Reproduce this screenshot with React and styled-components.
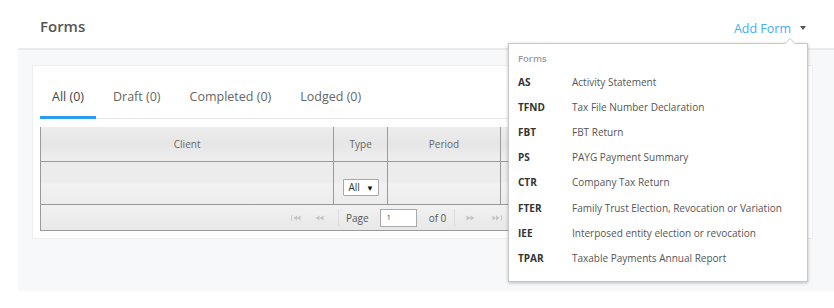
import React from "react";
import styled, { createGlobalStyle } from "styled-components";

const GlobalStyle = createGlobalStyle`
  body {
    margin: 0;
    background: #ffffff;
    font-family: "Open Sans", "Noto Sans", Arial, sans-serif;
  }
`;

const forms = [
  ["AS", "Activity Statement"],
  ["TFND", "Tax File Number Declaration"],
  ["FBT", "FBT Return"],
  ["PS", "PAYG Payment Summary"],
  ["CTR", "Company Tax Return"],
  ["FTER", "Family Trust Election, Revocation or Variation"],
  ["IEE", "Interposed entity election or revocation"],
  ["TPAR", "Taxable Payments Annual Report"],
];

const tabs = ["All (0)", "Draft (0)", "Completed (0)", "Lodged (0)"];

const columns = [
  ["Client", 294],
  ["Type", 54],
  ["Period", 113],
  ["Status", 110],
  ["Modified", 194],
];

// small pager arrows, drawn as in the old grid toolbar
function PagerIcon({ dir, bar }) {
  const flip = dir === "right" ? "scale(-1,1) translate(-12,0)" : undefined;
  return (
    <svg width="12" height="8" viewBox="0 0 12 8">
      <g transform={flip} fill="#c4c4c4">
        {bar && <rect x="1" y="1.5" width="1" height="5" />}
        <polygon points={bar ? "3.5,4 7,1.5 7,6.5" : "1.5,4 5.5,1.5 5.5,6.5"} />
        <polygon points={bar ? "7,4 10.5,1.5 10.5,6.5" : "5.5,4 9.5,1.5 9.5,6.5"} />
      </g>
    </svg>
  );
}

function App() {
  return (
    <Page>
      <GlobalStyle />
      <Header>
        <Title>Forms</Title>
        <AddForm>
          Add Form <Caret />
        </AddForm>
      </Header>

      <Body>
        <Card>
          <Tabs>
            {tabs.map((t, i) => (
              <Tab key={t} active={i === 0}>{t}</Tab>
            ))}
          </Tabs>

          <Grid>
            <Row height={35}>
              {columns.map(([name, w]) => (
                <HeadCell key={name} width={w}>{name}</HeadCell>
              ))}
            </Row>
            <Row height={43}>
              {columns.map(([name, w]) => (
                <FilterCell key={name} width={w}>
                  {name === "Type" && (
                    <Select>
                      All <span>▼</span>
                    </Select>
                  )}
                </FilterCell>
              ))}
            </Row>
            <Pager>
              <PagerBtn ml={249}><PagerIcon dir="left" bar /></PagerBtn>
              <PagerBtn ml={12}><PagerIcon dir="left" /></PagerBtn>
              <Sep ml={12} />
              <PagerText ml={7}>Page</PagerText>
              <PageInput>1</PageInput>
              <PagerText ml={12}>of 0</PagerText>
              <Sep ml={8} />
              <PagerBtn ml={9}><PagerIcon dir="right" /></PagerBtn>
              <PagerBtn ml={15}><PagerIcon dir="right" bar /></PagerBtn>
            </Pager>
          </Grid>
        </Card>
      </Body>

      <Menu>
        <MenuTitle>Forms</MenuTitle>
        {forms.map(([code, label]) => (
          <MenuItem key={code}>
            <Code>{code}</Code>
            <Label>{label}</Label>
          </MenuItem>
        ))}
      </Menu>
    </Page>
  );
}

const Page = styled.div`
  position: relative;
  width: 834px;
  height: 308px;
  overflow: hidden;
  background: #fff;
`;

const Header = styled.div`
  height: 48px;
  display: flex;
  align-items: center;
  justify-content: space-between;
  padding: 0 28px 0 40px;
  box-sizing: border-box;
`;

const Title = styled.h1`
  margin: 4px 0 0;
  font-size: 15px;
  font-weight: 600;
  color: #555;
`;

const AddForm = styled.div`
  display: flex;
  align-items: center;
  gap: 6px;
  margin-top: 8px;
  font-size: 12.5px;
  color: #44acf2;
`;

const Caret = styled.span`
  width: 0;
  height: 0;
  border-left: 3.5px solid transparent;
  border-right: 3.5px solid transparent;
  border-top: 4px solid #555;
  margin-left: 3px;
`;

const Body = styled.div`
  margin-left: 18px;
  height: 243px;
  background: #f7f8fa;
  border-top: 2px solid #e9ebee;
  box-sizing: border-box;
  padding: 15px 21px 0 14px;
`;

const Card = styled.div`
  background: #fff;
  border: 1px solid #eceef0;
  height: 174px;
  box-sizing: border-box;
  padding: 0 7px;
`;

const Tabs = styled.div`
  display: flex;
  gap: 5px;
  height: 52px;
  border-bottom: 1px solid #e6e6e6;
`;

const Tab = styled.div`
  display: flex;
  align-items: center;
  padding: 10px 12px 0;
  font-size: 12.5px;
  color: ${(p) => (p.active ? "#444" : "#666")};
  border-bottom: 3px solid ${(p) => (p.active ? "#2b9bf0" : "transparent")};
  margin-bottom: -1px;
`;

const Grid = styled.div`
  margin-top: 8px;
  border: 1px solid #9a9a9a;
  border-top: none;
  background: linear-gradient(#eeeeee, #e6e6e6 45%, #efefef);
`;

const Row = styled.div`
  display: flex;
  height: ${(p) => p.height}px;
  border-bottom: 1px solid #9a9a9a;
  box-sizing: border-box;
`;

const HeadCell = styled.div`
  width: ${(p) => p.width}px;
  display: flex;
  align-items: center;
  justify-content: center;
  font-size: 10px;
  color: #666;
  border-right: 1px solid #9a9a9a;
  box-sizing: border-box;
  background: linear-gradient(#ededed, #e6e6e6 50%, #eeeeee);
`;

const FilterCell = styled(HeadCell)`
  padding-top: 8px;
  background: linear-gradient(#ececec, #ececec 45%, #f2f2f2 55%, #ececec);
`;

const Select = styled.div`
  display: flex;
  align-items: center;
  gap: 6px;
  height: 15px;
  padding: 0 4px 0 5px;
  background: #fff;
  border: 1px solid #a9a9a9;
  border-radius: 1px;
  font-size: 10px;
  color: #333;

  span {
    font-size: 8px;
    color: #111;
  }
`;

const Pager = styled.div`
  height: 25px;
  display: flex;
  align-items: center;
  background: linear-gradient(#f1f1f1, #e8e8e8);
`;

const PagerBtn = styled.span`
  display: flex;
  margin-left: ${(p) => p.ml}px;
`;

const Sep = styled.span`
  width: 1px;
  height: 17px;
  background: #dcdcdc;
  margin-left: ${(p) => p.ml}px;
`;

const PagerText = styled.span`
  font-size: 10px;
  color: #555;
  margin-left: ${(p) => p.ml}px;
`;

const PageInput = styled.div`
  width: 37px;
  height: 18px;
  box-sizing: border-box;
  background: #fff;
  border: 1px solid #a9a9a9;
  font-size: 7px;
  color: #333;
  display: flex;
  align-items: center;
  padding-left: 6px;
  margin-left: 11px;
`;

const Menu = styled.div`
  position: absolute;
  left: 508px;
  top: 43px;
  width: 300px;
  height: 239px;
  box-sizing: border-box;
  background: #fff;
  border: 1px solid #c8c8c8;
  box-shadow: 0 1px 3px rgba(0, 0, 0, 0.25);
  padding: 8px 0 0 9px;

  &::before,
  &::after {
    content: "";
    position: absolute;
    right: 11px;
    width: 0;
    height: 0;
    border-left: 6px solid transparent;
    border-right: 6px solid transparent;
  }
  &::before {
    top: -6px;
    border-bottom: 6px solid #c8c8c8;
  }
  &::after {
    top: -5px;
    border-bottom: 6px solid #fff;
  }
`;

const MenuTitle = styled.div`
  font-size: 9.5px;
  font-weight: 600;
  color: #9a9a9a;
  height: 14px;
  line-height: 14px;
  margin-bottom: 3px;
`;

const MenuItem = styled.div`
  display: flex;
  align-items: center;
  height: 25.2px;
  font-size: 10px;
`;

const Code = styled.span`
  width: 54px;
  font-weight: 700;
  color: #333;
`;

const Label = styled.span`
  color: #555;
`;

export default App;
